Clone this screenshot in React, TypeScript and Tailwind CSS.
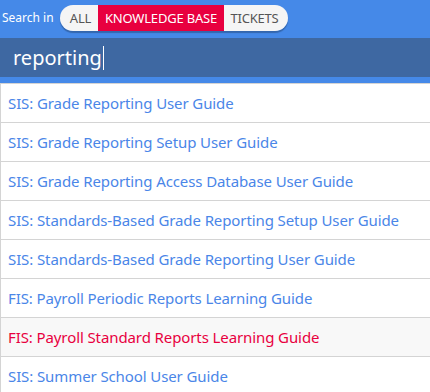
import { useState } from 'react';

// ─── SEARCH RESULTS ─────────────────────────────────────────
const RESULTS = [
  'SIS: Grade Reporting User Guide',
  'SIS: Grade Reporting Setup User Guide',
  'SIS: Grade Reporting Access Database User Guide',
  'SIS: Standards-Based Grade Reporting Setup User Guide',
  'SIS: Standards-Based Grade Reporting User Guide',
  'FIS: Payroll Periodic Reports Learning Guide',
  'FIS: Payroll Standard Reports Learning Guide',
  'SIS: Summer School User Guide',
];

const SCOPES = [
  { key: 'ALL', width: 'w-[38px] pl-[3px]' },
  { key: 'KNOWLEDGE BASE', width: 'w-[126px]' },
  { key: 'TICKETS', width: 'w-[64px] pr-[3px]' },
];

export default function App() {
  const [scope, setScope] = useState('KNOWLEDGE BASE');
  const hovered = 6;

  return (
    <div className="w-[430px] h-[392px] overflow-hidden bg-[#4589e8] font-['Noto_Sans',sans-serif]">
      {/* Scope switch */}
      <div className="flex items-center h-[38px] pl-[2px] pb-[2px]">
        <span className="text-white text-[12px] w-[58px]">Search in</span>
        <div className="flex h-[26px] rounded-full overflow-hidden shadow-[0_2px_1px_rgba(0,0,0,0.25)]">
          {SCOPES.map((s) => (
            <button
              key={s.key}
              onClick={() => setScope(s.key)}
              className={`${s.width} text-[13px] leading-none text-center tracking-[-0.2px] ${
                s.key === scope ? 'bg-[#e8003f] text-white' : 'bg-[#f5f5f5] text-[#555]'
              }`}
            >
              {s.key}
            </button>
          ))}
        </div>
      </div>

      {/* Query box */}
      <div className="h-[39px] bg-[#3e68a2] flex items-center pl-[13px]">
        <span className="text-white text-[20px] leading-none">reporting</span>
        <span className="w-px h-[24px] bg-white ml-px" />
      </div>

      {/* Dropdown */}
      <div className="mt-[6px] bg-white border-t border-l border-b border-[#d4d4d4] w-[440px]">
        {RESULTS.map((r, i) => (
          <div
            key={r}
            className={`h-[39px] flex items-center pl-[7px] text-[15px] tracking-[-0.1px] border-b border-[#d4d4d4] last:border-b-0 ${
              i === hovered ? 'bg-[#f8f8f8] text-[#e8003f]' : 'text-[#4a86e8]'
            }`}
          >
            {r}
          </div>
        ))}
      </div>
    </div>
  );
}
